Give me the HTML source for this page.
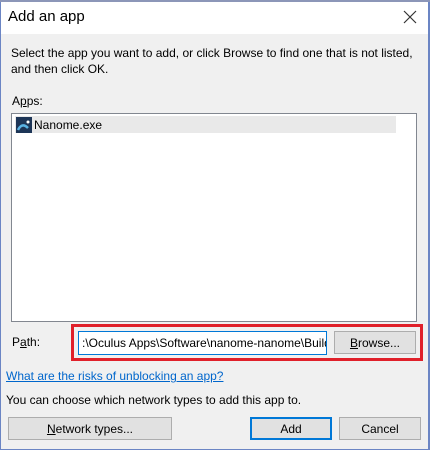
<!DOCTYPE html><html><head><style>
body{margin:0;width:430px;height:450px;overflow:hidden;background:#fff;font-family:"Liberation Sans",sans-serif;font-size:12px;color:#000;position:relative}
.a{position:absolute}
.btn{position:absolute;background:#e1e1e1;border:1px solid #adadad;box-sizing:border-box;text-align:center;line-height:22px}
</style></head><body>
<div class="a" style="left:0;top:0;width:430px;height:450px;box-sizing:border-box;border-left:1px solid #6b85c4;border-right:2px solid #6b85c4;border-bottom:1px solid #6b85c4"></div>
<div class="a" style="left:0;top:0;width:430px;height:2px;background:#8c96b8"></div>
<div class="a" style="left:1px;top:2px;width:427px;height:32px;background:#fff"></div>
<div class="a" style="left:8px;top:8px;font-size:15px">Add an app</div>
<svg class="a" style="left:403px;top:10px" width="14" height="14"><path d="M1 1L13 13M13 1L1 13" stroke="#333" stroke-width="1.2"/></svg>
<div class="a" style="left:1px;top:34px;width:427px;height:415px;background:#f0f0f0"></div>
<div class="a" style="left:11px;top:45px;line-height:16px">Select the app you want to add, or click Browse to find one that is not listed,<br>and then click OK.</div>
<div class="a" style="left:12px;top:94px">A<u>p</u>ps:</div>
<div class="a" style="left:11px;top:113px;width:406px;height:209px;background:#fff;border:1px solid #828790;box-sizing:border-box"></div>
<div class="a" style="left:15px;top:116px;width:381px;height:17px;background:#e9e9e9"></div>
<div class="a" style="left:16px;top:117px;width:16px;height:16px;background:#1d3557"><svg width="16" height="16"><path d="M2 13Q6 5 12 11" stroke="#5ab4e5" stroke-width="2.5" fill="none"/><circle cx="12" cy="5" r="1.5" fill="#fff"/></svg></div>
<div class="a" style="left:34px;top:118px">Nanome.exe</div>
<div class="a" style="left:12px;top:335px">P<u>a</u>th:</div>
<div class="a" style="left:71px;top:324px;width:352px;height:37px;border:3px solid #e0202a;box-sizing:border-box"></div>
<div class="a" style="left:78px;top:331px;width:249px;height:24px;background:#fff;border:1px solid #0078d7;box-sizing:border-box;overflow:hidden;white-space:nowrap;line-height:22px;padding-left:3px">:\Oculus Apps\Software\nanome-nanome\Build</div>
<div class="btn" style="left:334px;top:331px;width:82px;height:23px"><u>B</u>rowse...</div>
<div class="a" style="left:6px;top:369px;color:#0066cc;text-decoration:underline">What are the risks of unblocking an app?</div>
<div class="a" style="left:6px;top:393px">You can choose which network types to add this app to.</div>
<div class="btn" style="left:8px;top:417px;width:164px;height:23px"><u>N</u>etwork types...</div>
<div class="btn" style="left:250px;top:417px;width:82px;height:23px;border:2px solid #0078d7;line-height:20px">Add</div>
<div class="btn" style="left:339px;top:417px;width:82px;height:23px">Cancel</div>
</body></html>
